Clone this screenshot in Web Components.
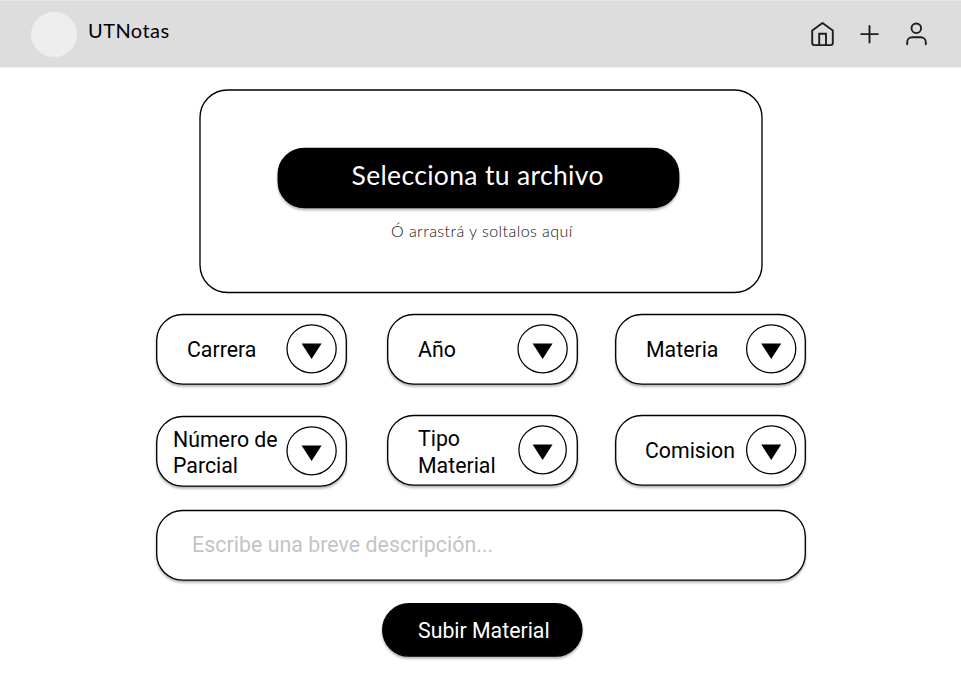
<!DOCTYPE html>
<html lang="es">
<head>
<meta charset="utf-8">
<title>UTNotas</title>
<style>
html, body { margin: 0; background: #fff; }
body { width: 961px; height: 682px; overflow: hidden; font-family: Roboto, "Liberation Sans", sans-serif; color: #000; }
</style>
</head>
<body>
<ut-app></ut-app>
<script>
const define = (name, html, setup) => {
  const template = document.createElement('template');
  template.innerHTML = html;
  customElements.define(name, class extends HTMLElement {
    constructor() {
      super();
      this.attachShadow({ mode: 'open' }).append(template.content.cloneNode(true));
    }
    connectedCallback() { if (setup) setup(this, this.shadowRoot); }
  });
};

/* Rounded outline behind its slotted content; box="x y w h" is the stroke's centre line. */
define('ut-frame', `
  <style>
    :host { display: block; position: relative; box-sizing: border-box; }
    svg { position: absolute; inset: 0; width: 100%; height: 100%; overflow: visible; }
    rect { fill: var(--fill, #fff); stroke: #000; stroke-width: 1.35; }
    :host([raised]) svg { filter: drop-shadow(0 2.4px 1.2px rgba(0,0,0,.3)); }
    .body { position: relative; height: 100%; box-sizing: border-box; }
  </style>
  <svg aria-hidden="true"><rect/></svg>
  <div class="body"><slot></slot></div>`,
  (host, root) => {
    const [x, y, w, h] = host.getAttribute('box').split(' ');
    const r = host.getAttribute('radius');
    Object.entries({ x, y, width: w, height: h, rx: r, ry: r })
      .forEach(([k, v]) => root.querySelector('rect').setAttribute(k, v));
  });

define('ut-header', `
  <style>
    :host { display: flex; height: 67px; box-sizing: border-box; background: #ddd; border-top: 1px solid #e5e5e5; box-shadow: 0 1px 0 #f1f1f1; padding: 0 31.5px 0 31px; }
    .logo { width: 45.5px; height: 45.5px; border-radius: 50%; background: #eee; margin-top: 10.5px; }
    .name { margin: 16px 0 0 11.5px; font: 400 20px/26px Lato, sans-serif; letter-spacing: .45px; }
    nav { margin-left: auto; display: flex; gap: 20px; padding-top: 20px; }
    svg { width: 27px; height: 27px; fill: none; stroke: #1e1e1e; stroke-width: 1.9; stroke-linecap: round; stroke-linejoin: round; }
  </style>
  <div class="logo"></div><div class="name">UTNotas</div>
  <nav>
    <svg viewBox="0 0 27 27"><path d="M3.2 9.4 13.5 2l10.3 7.4v12.7a2 2 0 0 1-2 2H5.2a2 2 0 0 1-2-2z"/><path stroke-linecap="butt" stroke-linejoin="miter" d="M10.2 24V12.7h6.8V24"/></svg>
    <svg viewBox="0 0 27 27"><path d="M13.5 5v16.6M5.2 13.1h16.6"/></svg>
    <svg viewBox="0 0 27 27"><circle cx="13.3" cy="7.3" r="4.8"/><path d="M4.2 23.2v-2a5 5 0 0 1 5-5h8.6a5 5 0 0 1 5 5v2"/></svg>
  </nav>`);

define('ut-drop', `
  <style>
    :host { display: block; width: 563px; }
    ut-frame { height: 204px; }
    .stack { display: flex; flex-direction: column; padding: 58px 0 0 79px; }
    .pick { --fill: #000; width: 402px; height: 61px; }
    .title { color: #fff; font: 400 26.5px/34px Lato, sans-serif; letter-spacing: .34px; padding: 11px 0 0 73.5px; white-space: nowrap; }
    .hint { font: 300 16px/22px Lato, sans-serif; color: #111; letter-spacing: .45px; margin: 12px 0 0 113px; white-space: nowrap; }
  </style>
  <ut-frame box="1 1 562 202.5" radius="27.5"><div class="stack">
    <ut-frame class="pick" raised box="0.2 1.3 400.5 59.3" radius="26"><div class="title">Selecciona tu archivo</div></ut-frame>
    <div class="hint">Ó arrastrá y soltalos aquí</div>
  </div></ut-frame>`);

define('ut-select', `
  <style>
    :host { display: block; width: 191px; height: 71px; }
    ut-frame { height: 71px; }
    .row { display: flex; height: 71px; align-items: center; justify-content: space-between; padding: 0 9px 0 var(--indent, 31px); box-sizing: border-box; }
    .label { font-size: 21.3px; line-height: 26.5px; width: var(--label, 93px); white-space: nowrap; padding-top: var(--drop, 2px); }
    svg { flex: none; width: 52px; height: 52px; overflow: visible; }
    ellipse { fill: #fff; stroke: #000; stroke-width: 1.25; }
  </style>
  <ut-frame raised box="0.7 0.5 189.6 69.6" radius="26"><div class="row">
    <div class="label"><slot></slot></div>
    <svg viewBox="0 0 52 52"><g><ellipse cx="26.2" cy="24.8" rx="24.6" ry="24"/><path d="M16.2 19.5h20L26.2 35.1z"/></g></svg>
  </div></ut-frame>`,
  (host, root) => {
    if (host.hasAttribute('narrow')) root.querySelector('ellipse').setAttribute('rx', 23.7);
    if (!host.hasAttribute('last')) root.querySelector('g').setAttribute('transform', 'translate(-.6 0)');
  });

define('ut-field', `
  <style>
    :host { display: block; width: 650px; }
    ut-frame { height: 71px; }
    .text { font-size: 21.3px; line-height: 26px; letter-spacing: .06px; color: #c4c4c4; padding: 22px 0 0 36px; }
  </style>
  <ut-frame raised box="0.7 0.5 648.6 69.6" radius="26"><div class="text"><slot></slot></div></ut-frame>`);

define('ut-submit', `
  <style>
    :host { display: block; width: 201px; --fill: #000; }
    ut-frame { height: 54px; }
    .text { color: #fff; font-size: 21.3px; line-height: 26px; padding: 15px 0 0 36px; white-space: nowrap; }
  </style>
  <ut-frame raised box="0.7 0.7 199.2 52.4" radius="26.2"><div class="text"><slot></slot></div></ut-frame>`);

define('ut-app', `
  <style>
    :host { display: block; }
    main { display: flex; flex-direction: column; padding: 22px 0 0 156px; }
    ut-drop { margin-left: 43px; }
    .grid { display: grid; grid-template-columns: 231px 228px 191px; grid-template-rows: 71px 71px; row-gap: 30px; margin-top: 21px; }
    .two { --drop: 4px; }
    .wide { --indent: 17px; --label: 107px; margin-top: 1px; --drop: 3px; }
    .com { --indent: 30px; --label: 94px; }
    ut-field { margin-top: 24px; }
    ut-submit { margin: 22px 0 0 226px; }
  </style>
  <ut-header></ut-header>
  <main>
    <ut-drop></ut-drop>
    <div class="grid">
      <ut-select>Carrera</ut-select><ut-select>Año</ut-select><ut-select last>Materia</ut-select>
      <ut-select class="wide">Número de<br>Parcial</ut-select><ut-select class="two" narrow>Tipo<br>Material</ut-select><ut-select class="com" last>Comision</ut-select>
    </div>
    <ut-field>Escribe una breve descripción...</ut-field>
    <ut-submit>Subir Material</ut-submit>
  </main>`);
</script>
</body>
</html>
